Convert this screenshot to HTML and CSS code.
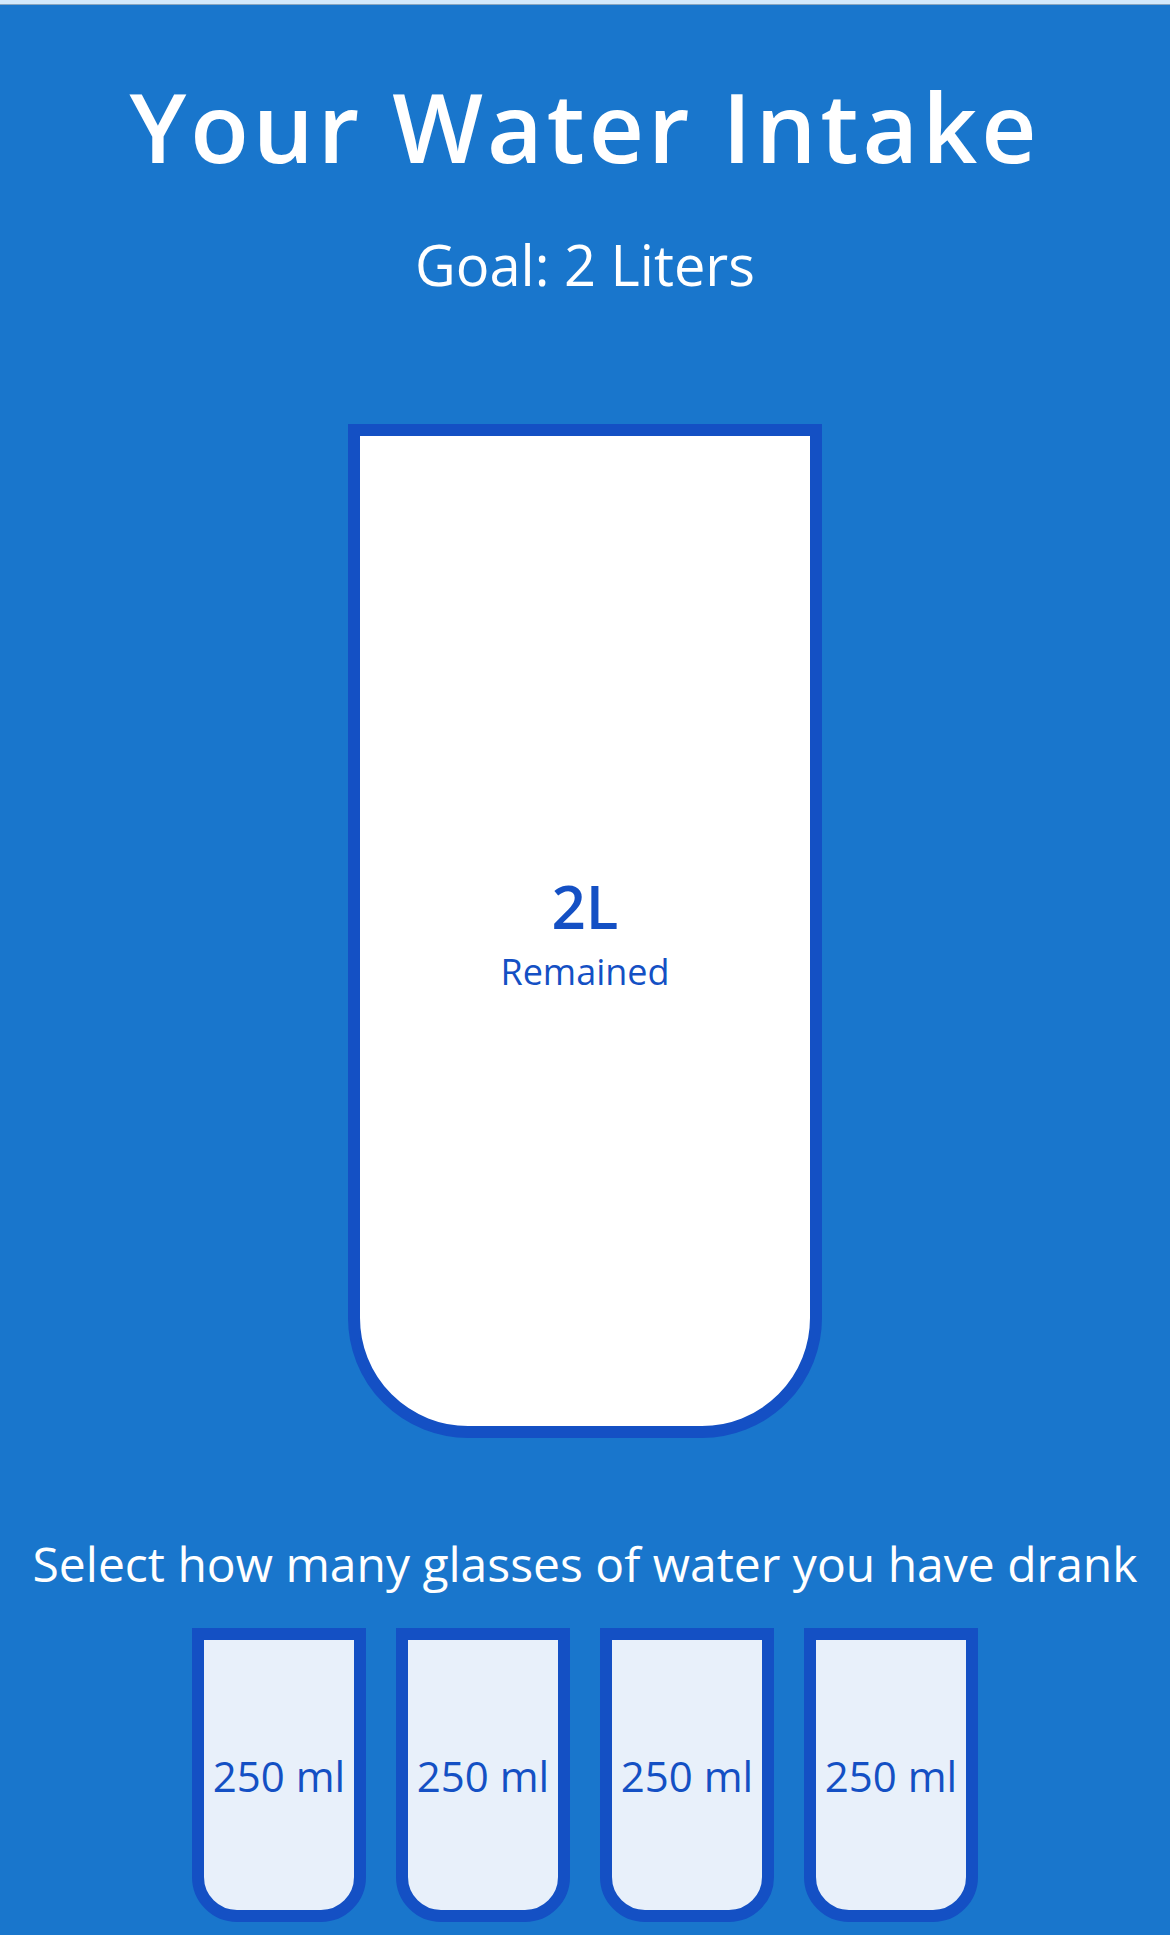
FILE: index.html
```html
<!DOCTYPE html>
<html lang="en">
<head>
<meta charset="UTF-8">
<title>Drink Water</title>
<link rel="stylesheet" href="styles.css">
</head>
<body>
<div class="topbar"></div>
<main class="app">
  <h1 class="title">Your Water Intake</h1>
  <h3 class="goal">Goal: 2 Liters</h3>
  <div class="cup">
    <div class="remained">
      <span class="remained-value">2L</span>
      <small class="remained-label">Remained</small>
    </div>
  </div>
  <p class="text">Select how many glasses of water you have drank</p>
  <div class="cups">
    <div class="cup cup-small">250 ml</div>
    <div class="cup cup-small">250 ml</div>
    <div class="cup cup-small">250 ml</div>
    <div class="cup cup-small">250 ml</div>
  </div>
</main>
</body>
</html>
```

FILE: styles.css
```css
* { box-sizing: border-box; }

html, body {
  margin: 0;
  padding: 0;
}

body {
  background-color: #1976cc;
  color: #fff;
  font-family: "Open Sans", "Noto Sans", sans-serif;
  min-height: 1935px;
}

.topbar {
  height: 5px;
  background: #d3e9fc;
  border-bottom: 1px solid #8aa6bf;
}

.app {
  display: flex;
  flex-direction: column;
  align-items: center;
  padding-top: 26px;
}

.title {
  font-size: 96px;
  font-weight: 600;
  letter-spacing: 4px;
  margin: 30px 0 0;
  line-height: 1.362;
}

.goal {
  font-size: 56px;
  font-weight: 400;
  margin: 34px 0 32px;
  line-height: 1.362;
}

.cup {
  background-color: #fff;
  border: 12px solid #1450c4;
  color: #1450c4;
  border-radius: 0 0 120px 120px;
  width: 474px;
  height: 1014px;
  margin: 90px 0 93px;
  display: flex;
  flex-direction: column;
  overflow: hidden;
}

.remained {
  flex: 1;
  display: flex;
  flex-direction: column;
  align-items: center;
  justify-content: center;
  text-align: center;
}

.remained-value {
  font-size: 60px;
  font-weight: 600;
  line-height: 1.362;
}

.remained-label {
  font-size: 36px;
  line-height: 1.362;
}

.text {
  font-size: 48px;
  margin: 0 0 17px;
  text-align: center;
  line-height: 1.362;
}

.cups {
  display: flex;
  flex-wrap: wrap;
  justify-content: center;
  align-items: center;
  width: 840px;
}

.cup.cup-small {
  width: 174px;
  height: 294px;
  margin: 15px;
  border-radius: 0 0 45px 45px;
  background-color: #e8f0fa;
  font-size: 42px;
  align-items: center;
  justify-content: center;
  text-align: center;
  line-height: 1.362;
}
```
